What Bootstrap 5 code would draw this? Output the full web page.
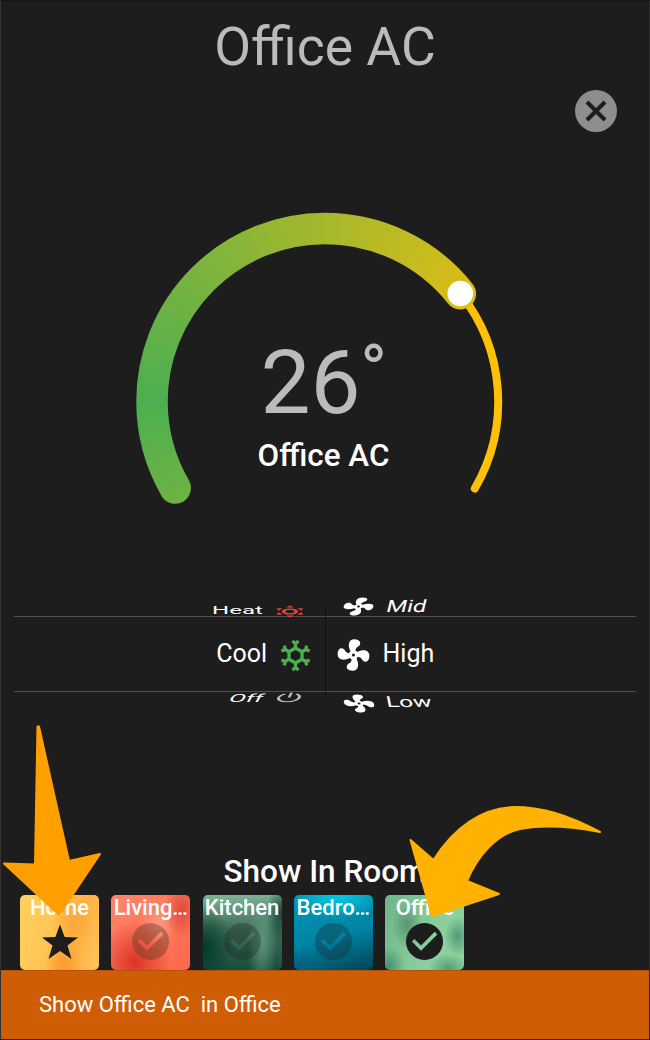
<!DOCTYPE html>
<html lang="en">
<head>
<meta charset="utf-8">
<meta name="viewport" content="width=device-width, initial-scale=1">
<title>Office AC</title>
<link href="https://cdn.jsdelivr.net/npm/bootstrap@5.3.0/dist/css/bootstrap.min.css" rel="stylesheet">
<style>
body{background:#1d1d1d;color:#fff;font-family:Roboto,sans-serif;overflow:hidden}
.panel{width:650px;height:1040px;border-top:1px solid #161616;border-left:1px solid #333;border-right:1px solid #292e31;border-bottom:1px solid #33200f}
.panel::before{content:"";position:absolute;left:-1px;top:-1px;width:1px;height:59px;background:linear-gradient(#1b3b96,#126878 25%,#1b741b 50%,#77701c 74%,#9a1c18)}
.device-title{font-size:53.5px;line-height:92px;height:89px;color:#bbb}
.close-row{height:42px;padding-right:32.5px}
.close-btn{width:42px;height:42px}
.dial-area{height:458px}
.dial-area svg{display:block;margin-left:-1px}
.reading{top:201px;left:259.5px;font-size:89px;line-height:100px;color:#bbb}
.degree{top:204px;left:359px;font-size:73px;line-height:70px;color:#bbb}
.dial-name{top:303px;left:-1.5px;font-size:31.4px;line-height:42px;font-weight:500}
.picker{height:128px;padding:0 13px;font-size:25px;line-height:30px}
.pick-edge{height:26px}
.pick-main{height:76px;border-top:1px solid #505050;border-bottom:1px solid #505050}
.pick-main svg{transform:translate(.5px,1px)}
.pick-left{width:310px;padding-right:11px}
.pick-right{padding-left:10px}
.pick-divider{width:1px;background:#121212;height:92px;left:324px;top:16px}
.t-heat{transform:translate(-5px,8px) scale(.96,.42)}
.t-off{transform:translate(-5px,-7px) scale(.97,.45) skewX(-14deg)}
.t-mid{transform:translate(-2.5px,3.5px) scale(.95,.68) skewX(-10deg)}
.t-low{transform:translate(-2.5px,-2.5px) scale(.98,.6) skewX(7deg)}
.rooms-title{font-size:31.5px;line-height:40px;margin-top:134px;font-weight:500}
.rooms{gap:12.3px;padding-left:19px;margin-top:3px}
.room{width:79px;height:75px;border-radius:5px;font-size:22px;line-height:26px;font-weight:500}
.room svg{display:block;margin:2px auto 0}
.home{background:radial-gradient(ellipse 20px 40px at 55% 100%,#ff982c,transparent),radial-gradient(ellipse 22px 30px at 68% 35%,#ffa639,transparent),linear-gradient(105deg,#ffd05e,#ffc453 45%,#ffb344 70%,#ffc45b)}
.living{background:radial-gradient(ellipse 36px 42px at 30% 90%,#dc3426,transparent),radial-gradient(ellipse 18px 30px at 90% 20%,#df493b,transparent),radial-gradient(ellipse 18px 22px at 60% 40%,#ff9b80,transparent),linear-gradient(150deg,#ff8568,#fd765c 55%,#ff6847)}
.kitchen{background:radial-gradient(ellipse 30px 40px at 2% 70%,#003b2a,transparent),radial-gradient(ellipse 16px 30px at 100% 25%,#174437,transparent),radial-gradient(ellipse 15px 50px at 75% 60%,#5b967a,transparent),linear-gradient(#7fb497,#416f59 45%,#174f3c)}
.bedroom{background:radial-gradient(ellipse 45px 25px at 55% 0,#00cde5,transparent),radial-gradient(ellipse 30px 20px at 0 100%,#00627e,transparent),linear-gradient(165deg,#0097b3,#0083a4 55%,#004354)}
.office{background:radial-gradient(ellipse 14px 20px at 92% 55%,#539b78,transparent),radial-gradient(ellipse 16px 20px at 5% 95%,#4a9371,transparent),radial-gradient(ellipse 15px 24px at 28% 40%,#58966f,transparent),radial-gradient(ellipse 20px 15px at 80% 98%,#539b78,transparent),linear-gradient(110deg,#6eb589,#8bcf9d 60%,#90d29e)}
.toast-bar{height:69px;background:#cf5d05;border-top:1px solid #b35208;padding:0 0 2px 38px;font-size:22px}
.arrows{left:-1px;top:-1px}
.hue{width:650px;height:457px;background:conic-gradient(from -90deg at 325px 269.5px,#4caf50,#ffc107 50%,#4caf50)}
</style>
</head>
<body>
<svg width="0" height="0" class="position-absolute">
<symbol id="fan" viewBox="0 0 24 24"><path fill="#fff" d="M12,11A1,1 0 0,0 11,12A1,1 0 0,0 12,13A1,1 0 0,0 13,12A1,1 0 0,0 12,11M12.5,2C17,2 17.11,5.57 14.75,6.75C13.76,7.24 13.32,8.29 13.13,9.22C13.61,9.42 14.03,9.73 14.35,10.13C18.05,8.13 22.03,8.92 22.03,12.5C22.03,17 18.46,17.1 17.28,14.73C16.78,13.74 15.72,13.3 14.79,13.11C14.59,13.59 14.28,14 13.88,14.34C15.87,18.03 15.08,22 11.5,22C7,22 6.91,18.42 9.27,17.24C10.25,16.75 10.69,15.71 10.89,14.79C10.4,14.59 9.97,14.27 9.65,13.87C5.96,15.85 2,15.07 2,11.5C2,7 5.56,6.89 6.74,9.26C7.24,10.25 8.29,10.68 9.22,10.87C9.41,10.39 9.73,9.97 10.14,9.65C8.15,5.96 8.94,2 12.5,2Z"/></symbol>
<g id="flake-arm"><path d="M0-6.500V-12.500M-3-14.600L0-11.800L3-14.600"/></g>
<symbol id="tick" viewBox="0 0 37 37"><path fill-rule="evenodd" d="M18.500 0a18.500 18.500 0 1 0 .01 0ZM15 27.700L5.800 18.500L8.400 15.900L15 22.500L28.700 8.800L31.300 11.400Z"/></symbol>
</svg>
<main class="panel position-relative d-flex flex-column overflow-hidden">
  <h1 class="device-title fw-normal text-center m-0">Office AC</h1>
  <div class="close-row d-flex justify-content-end">
    <button class="close-btn btn p-0 border-0 d-flex" aria-label="Close"><svg width="42" height="42" viewBox="0 0 42 42"><circle cx="21" cy="21" r="21" fill="#8e8e8e"/><path d="M12 12L30 30M30 12L12 30" stroke="#1d1d1d" stroke-width="4"/></svg></button>
  </div>
  <section class="dial-area position-relative">
    <svg width="650" height="457" viewBox="0 0 650 457">
      <mask id="arc" maskUnits="userSpaceOnUse" x="0" y="0" width="650" height="457"><path d="M175.200 356A173 173 0 0 1 152 269.500A173 173 0 0 1 325 96.500A173 173 0 0 1 460.300 161.700" fill="none" stroke="#fff" stroke-width="31.500" stroke-linecap="round"/></mask>
      <path d="M460.500 161.800A173 173 0 0 1 474.800 356.500" fill="none" stroke="#ffc107" stroke-width="8" stroke-linecap="round"/>
      <g mask="url(#arc)"><foreignObject width="650" height="457"><div class="hue"></div></foreignObject></g>
      <circle cx="460.300" cy="161.500" r="12.800" fill="#fff"/>
    </svg>
    <div class="reading position-absolute">26</div>
    <div class="degree position-absolute">°</div>
    <div class="dial-name position-absolute w-100 text-center">Office AC</div>
  </section>
  <section class="picker position-relative">
    <div class="pick-edge d-flex align-items-center">
      <div class="pick-left d-flex justify-content-end align-items-center gap-3"><span class="t-heat">Heat</span>
        <svg width="28" height="28" viewBox="-15 -15 30 30" overflow="visible" style="transform:translate(-9px,8.5px) scale(1.04,.4)"><circle r="6.500" fill="none" stroke="#f44336" stroke-width="3.500"/><g fill="#f44336"><path id="ray" d="M-4-11L0-16L4-11Z"/><use href="#ray" transform="rotate(60)"/><use href="#ray" transform="rotate(120)"/><use href="#ray" transform="rotate(180)"/><use href="#ray" transform="rotate(240)"/><use href="#ray" transform="rotate(300)"/></g></svg></div>
      <div class="pick-right d-flex align-items-center"><svg width="38" height="38" style="transform:translate(5.5px,3.5px) scale(.94,.57) skewX(-12deg)"><use href="#fan"/></svg><span class="ms-3 t-mid">Mid</span></div>
    </div>
    <div class="pick-main d-flex align-items-center">
      <div class="pick-left d-flex justify-content-end align-items-center"><span>Cool</span>
        <svg class="ms-2" width="38" height="38" viewBox="-19 -19 38 38"><g transform="translate(1 .500)" fill="none" stroke="#4caf50" stroke-width="3.300"><path d="M0-7.500L6.500-3.750V3.750L0 7.500L-6.500 3.750V-3.750Z"/><use href="#flake-arm"/><use href="#flake-arm" transform="rotate(60)"/><use href="#flake-arm" transform="rotate(120)"/><use href="#flake-arm" transform="rotate(180)"/><use href="#flake-arm" transform="rotate(240)"/><use href="#flake-arm" transform="rotate(300)"/></g></svg></div>
      <div class="pick-right d-flex align-items-center"><svg width="38" height="38"><use href="#fan"/></svg><span style="margin-left:10.5px">High</span></div>
    </div>
    <div class="pick-edge d-flex align-items-center">
      <div class="pick-left d-flex justify-content-end align-items-center gap-3"><span class="t-off">Off</span>
        <svg width="28" height="28" viewBox="-14 -14 28 28" style="transform:translate(-10px,-7.5px) scale(.94,.38) skewX(-12deg)"><path d="M-6-9A11 11 0 1 0 6-9M0-13V0" fill="none" stroke="#bbb" stroke-width="3"/></svg></div>
      <div class="pick-right d-flex align-items-center"><svg width="38" height="38" style="transform:translate(6px,-1.5px) scale(.94,.57) skewX(12deg)"><use href="#fan"/></svg><span class="ms-3 t-low">Low</span></div>
    </div>
    <div class="pick-divider position-absolute"></div>
  </section>
  <h2 class="rooms-title text-center mb-0">Show In Room</h2>
  <div class="rooms d-flex">
    <div class="room home text-center overflow-hidden"><div>Home</div><svg width="38" height="38" viewBox="-19 -19 38 38"><path fill="#1d1d1d" d="M0-17.500L4.600-5L18-4.600L7.500 3.500L11.500 17L0 9L-11.500 17L-7.500 3.500L-18-4.600L-4.600-5Z"/></svg></div>
    <div class="room living text-center overflow-hidden"><div>Living…</div><svg width="37" height="37" fill="#603b28" opacity=".42"><use href="#tick"/></svg></div>
    <div class="room kitchen text-center overflow-hidden"><div>Kitchen</div><svg width="37" height="37" fill="#1d1d1d" opacity=".3"><use href="#tick"/></svg></div>
    <div class="room bedroom text-center overflow-hidden"><div>Bedro…</div><svg width="37" height="37" fill="#1d1d1d" opacity=".3"><use href="#tick"/></svg></div>
    <div class="room office text-center overflow-hidden"><div>Office</div><svg width="37" height="37" fill="#1d1d1d"><use href="#tick"/></svg></div>
  </div>
  <footer class="toast-bar d-flex align-items-center mt-auto flex-shrink-0">Show Office AC&nbsp; in Office</footer>
  <svg class="arrows position-absolute" width="650" height="1040" stroke-linejoin="round" pointer-events="none">
    <path d="M37.500 726.500L35 864.500L4 863.500L59.200 915L100 854L69 861L39 726.500Z" fill="#ffa000" stroke="#ffa000" stroke-width="2"/>
    <path d="M600 832C566 814 541 807 514 807C482 808 454 827 433.500 860L410.500 840L432 916L499 894L467 881C478 855 497 834 520 829C547 824 579 828 600 832Z" fill="#ffb300" stroke="#ffb300" stroke-width="2"/>
  </svg>
</main>
<script src="https://cdn.jsdelivr.net/npm/bootstrap@5.3.0/dist/js/bootstrap.bundle.min.js"></script>
</body>
</html>
